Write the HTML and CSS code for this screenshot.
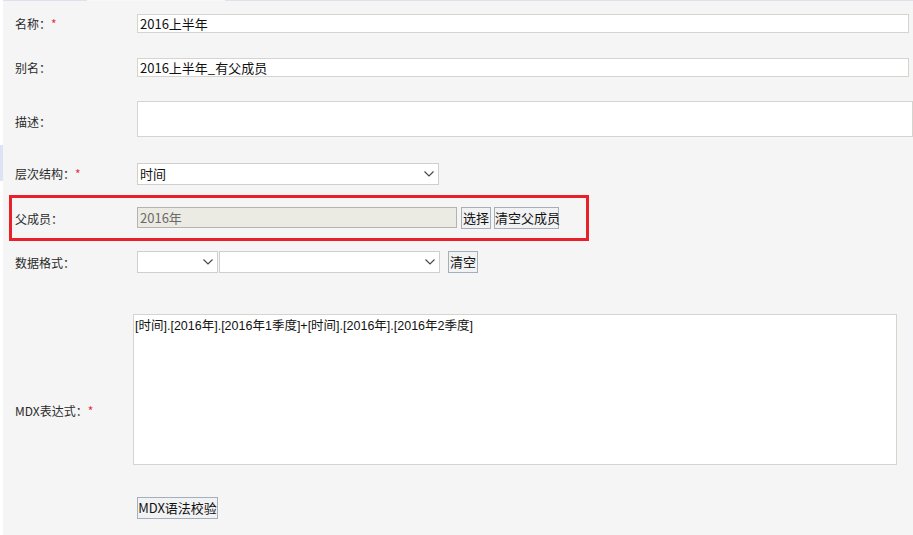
FILE: index.html
```html
<!DOCTYPE html>
<html lang="zh-CN">
<head>
<meta charset="utf-8">
<title>成员编辑</title>
<link rel="stylesheet" href="styles.css">
</head>
<body>
<div class="page">
  <div class="edge">
    <div class="edge-gap"></div>
    <div class="edge-mark"></div>
  </div>
  <div class="main">
    <div class="tabline">
      <div class="tl-a"></div>
      <div class="tl-b"></div>
      <div class="tl-c"></div>
    </div>
    <div class="form">
      <div class="row row-name">
        <div class="label">名称<span class="colon">：</span><span class="req">*</span></div>
        <div class="input input-wide">2016上半年</div>
      </div>
      <div class="row row-alias">
        <div class="label">别名<span class="colon">：</span></div>
        <div class="input input-wide">2016上半年_有父成员</div>
      </div>
      <div class="row row-desc">
        <div class="label label-desc">描述<span class="colon">：</span></div>
        <div class="textarea textarea-desc"></div>
      </div>
      <div class="row row-hier">
        <div class="label">层次结构<span class="colon">：</span><span class="req">*</span></div>
        <div class="select select-hier">
          <span>时间</span>
          <svg class="chev" width="10" height="6" viewBox="0 0 10 6"><path d="M0.5 0.5 L5 5 L9.5 0.5" fill="none" stroke="#444" stroke-width="1.1"/></svg>
        </div>
      </div>
      <div class="row row-parent">
        <div class="label">父成员<span class="colon">：</span></div>
        <div class="input input-disabled">2016年</div>
        <div class="btn btn-choose">选择</div>
        <div class="btn btn-clear-parent">清空父成员</div>
      </div>
      <div class="row row-format">
        <div class="label">数据格式<span class="colon">：</span></div>
        <div class="select select-fmt1">
          <span></span>
          <svg class="chev" width="10" height="6" viewBox="0 0 10 6"><path d="M0.5 0.5 L5 5 L9.5 0.5" fill="none" stroke="#444" stroke-width="1.1"/></svg>
        </div>
        <div class="select select-fmt2">
          <span></span>
          <svg class="chev" width="10" height="6" viewBox="0 0 10 6"><path d="M0.5 0.5 L5 5 L9.5 0.5" fill="none" stroke="#444" stroke-width="1.1"/></svg>
        </div>
        <div class="btn btn-clear">清空</div>
      </div>
      <div class="row row-mdx">
        <div class="label label-mdx">MDX表达式<span class="colon">：</span><span class="req">*</span></div>
        <div class="textarea textarea-mdx">[时间].[2016年].[2016年1季度]+[时间].[2016年].[2016年2季度]</div>
      </div>
      <div class="row row-check">
        <div class="label"></div>
        <div class="btn btn-check">MDX语法校验</div>
      </div>
    </div>
  </div>
</div>
</body>
</html>
```

FILE: styles.css
```css
* { box-sizing: border-box; }
html, body { margin: 0; padding: 0; }
body {
  background: #ffffff;
  font-family: "Noto Sans CJK SC", "Noto Sans", sans-serif;
  color: #222;
  width: 913px;
  height: 535px;
  overflow: hidden;
}
.page {
  display: flex;
  height: 535px;
}
.edge {
  width: 3px;
  display: flex;
  flex-direction: column;
  background: #ffffff;
}
.edge-gap { height: 145px; }
.edge-mark { height: 36px; background: #dce3f4; }
.main {
  flex: 1;
  background: #f5f5f5;
  display: flex;
  flex-direction: column;
}
.tabline {
  display: flex;
  height: 1px;
}
.tl-a { width: 84px; background: #e1e1ee; }
.tl-b { width: 138px; background: #f8f8f8; }
.tl-c { flex: 1; background: #e1e1ee; }

.form {
  padding-left: 6px;
  display: flex;
  flex-direction: column;
}
.row {
  display: flex;
  align-items: center;
  padding-left: 6px;
}
.label {
  width: 122px;
  flex: none;
  font-size: 12px;
  line-height: 17px;
  color: #2a2a2a;
  white-space: nowrap;
}
.colon { font-family: "Noto Sans CJK JP", "Noto Sans CJK SC", sans-serif; }
.req { color: #e5323b; }

.input {
  height: 19px;
  border: 1px solid #d6d4cf;
  background: #fff;
  font-size: 13px;
  line-height: 17px;
  padding: 0 2px;
  color: #111;
  white-space: nowrap;
}
.input-wide { width: 772px; }

.textarea {
  background: #fff;
  border: 1px solid #d6d4cf;
  font-size: 13px;
  line-height: 17px;
  color: #111;
}

.row-name { height: 45px; }
.row-alias { height: 43px; }
.row-desc { height: 60px; }
.label-desc { padding-top: 4px; }
.textarea-desc { width: 776px; height: 36px; }
.row-hier { height: 46px; padding-top: 3px; }

.select {
  height: 22px;
  border: 1px solid #cfcfcb;
  background: #fff;
  display: flex;
  align-items: center;
  justify-content: space-between;
  padding: 0 4px 0 2px;
  font-size: 13px;
  line-height: 17px;
  color: #111;
}
.select-hier { width: 302px; }
.chev { display: block; flex: none; }

.row-parent {
  height: 46px;
  width: 580px;
  border: 3px solid #e8202a;
  padding-left: 3px;
}
.input-disabled {
  width: 320px;
  height: 21px;
  background: #ebeae3;
  border: 1px solid #b4b4ae;
  color: #6a6a6a;
  line-height: 19px;
  margin-top: -2px;
}
.btn {
  height: 22px;
  border: 1px solid #a5aebb;
  background: #f1f2f3;
  font-size: 13px;
  line-height: 20px;
  color: #111;
  text-align: center;
  white-space: nowrap;
}
.btn-choose { width: 30px; margin-left: 4px; }
.btn-clear-parent { width: 65px; margin-left: 3px; }

.row-format { height: 42px; }
.select-fmt1 { width: 81px; }
.select-fmt2 { width: 221px; margin-left: 1px; }
.btn-clear { width: 30px; margin-left: 8px; }

.row-mdx {
  align-items: flex-start;
  padding-top: 31px;
}
.label-mdx { width: 118px; padding-top: 88px; }
.textarea-mdx {
  width: 764px;
  height: 151px;
  padding: 3px 1px;
  white-space: nowrap;
  font-family: "Liberation Sans", "Noto Sans CJK SC", sans-serif;
  font-size: 12.5px;
}

.row-check { padding-top: 32px; }
.btn-check { width: 81px; }
```
